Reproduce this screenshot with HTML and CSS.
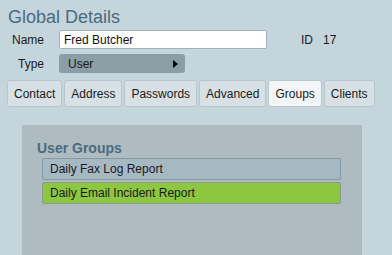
FILE: index.html
```html
<html>

<head>
  <link rel="stylesheet" href="styles.css">
</head>

<body>
  <div class="details">
    <h1 class="title">Global Details</h1>
    <div class="field-row">
      <label class="field-label" for="userName">Name</label>
      <input class="text-input" id="userName" type="text" value="Fred Butcher" />
      <span class="id-label">ID</span>
      <span class="id-value">17</span>
    </div>
    <div class="field-row type-row">
      <span class="field-label">Type</span>
      <div class="type-select">
        <span>User</span>
        <span class="select-arrow"></span>
      </div>
    </div>
    <div class="tabs">
      <button class="tab">Contact</button>
      <button class="tab">Address</button>
      <button class="tab">Passwords</button>
      <button class="tab">Advanced</button>
      <button class="tab tab-active">Groups</button>
      <button class="tab">Clients</button>
    </div>
    <div class="panel">
      <h2 class="panel-title">User Groups</h2>
      <div class="group-list">
        <div class="group-item">Daily Fax Log Report</div>
        <div class="group-item group-selected">Daily Email Incident Report</div>
      </div>
    </div>
  </div>
</body>

</html>
```

FILE: styles.css
```css
body {
  margin: 0;
  background-color: #c5d5dc;
  font-family: "Liberation Sans", Arial, sans-serif;
  font-size: 12px;
  color: #1a1a1a;
}

.details {
  padding: 7px 0 0 0;
}

.title {
  margin: 0 0 0 8px;
  font-size: 18px;
  line-height: 21px;
  font-weight: normal;
  color: #4b6a80;
}

.field-row {
  display: flex;
  align-items: center;
  margin-top: 2px;
}

.type-row {
  margin-top: 5px;
}

.field-label {
  width: 44px;
  text-align: right;
  margin-right: 15px;
}

.text-input {
  width: 208px;
  height: 19px;
  box-sizing: border-box;
  margin: 0;
  padding: 0 4px;
  border: 1px solid #9db3c1;
  border-radius: 2px;
  background-color: #ffffff;
  font-family: "Liberation Sans", Arial, sans-serif;
  font-size: 12px;
  color: #111111;
  outline: none;
}

.id-label {
  margin-left: 34px;
}

.id-value {
  margin-left: 10px;
}

.type-select {
  display: flex;
  align-items: center;
  justify-content: space-between;
  width: 126px;
  height: 19px;
  box-sizing: border-box;
  padding: 0 7px 0 9px;
  border-radius: 3px;
  background-color: #8b9da5;
}

.select-arrow {
  width: 0;
  height: 0;
  border-top: 4.5px solid transparent;
  border-bottom: 4.5px solid transparent;
  border-left: 5px solid #000000;
}

.tabs {
  display: flex;
  gap: 2px;
  margin: 7px 0 0 7px;
}

.tab {
  height: 27px;
  padding: 0 6px;
  border: 1px solid #b6c6cd;
  border-radius: 3px;
  background-color: #d7e1e5;
  font-family: "Liberation Sans", Arial, sans-serif;
  font-size: 12px;
  color: #1a1a1a;
  cursor: pointer;
}

.tab-active {
  background-color: #f2f6f7;
}

.panel {
  width: 339px;
  height: 130px;
  margin: 18px 0 0 22px;
  padding-top: 15px;
  box-sizing: border-box;
  background-color: #aebcc1;
  box-shadow: 1px 0 0 #a9b9bf;
}

.panel-title {
  margin: 0 0 1px 15px;
  font-size: 14px;
  line-height: 17px;
  color: #4b6a80;
}

.group-list {
  display: flex;
  flex-direction: column;
  gap: 2px;
  padding: 0 20px;
}

.group-item {
  height: 22px;
  line-height: 20px;
  box-sizing: border-box;
  padding-left: 7px;
  border: 1px solid #8898a0;
  border-radius: 2px;
  background-color: #a6b8c2;
}

.group-selected {
  background-color: #8dc63f;
  border-color: #8a9a8e;
}
```
